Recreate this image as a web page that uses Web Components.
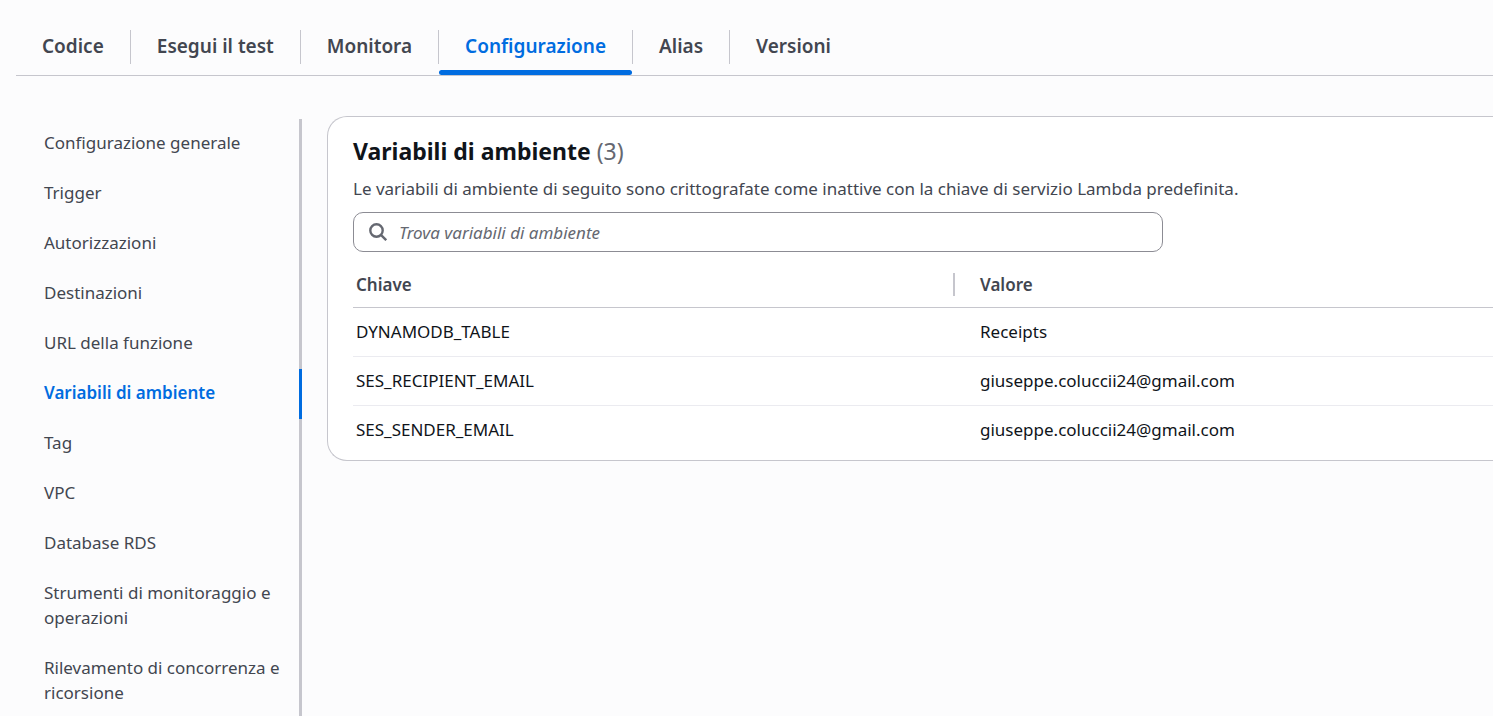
<!DOCTYPE html>
<html lang="it">
<head>
<meta charset="utf-8">
<meta name="viewport" content="width=device-width, initial-scale=1">
<title>Configurazione - Variabili di ambiente</title>
<style>
  :root {
    --accent: #006ce0;
    --text: #0f141a;
    --text-soft: #424650;
    --text-muted: #656871;
    --line: #c6c6cd;
    --line-soft: #ebebf0;
    --page: #fcfcfd;
  }
  body {
    margin: 0;
    background: var(--page);
    color: var(--text);
    font: 17px/25px "Noto Sans", "Open Sans", sans-serif;
  }
</style>
</head>
<body>
<config-page>
  <tab-bar slot="tabs">
    <tab-item>Codice</tab-item>
    <tab-item>Esegui il test</tab-item>
    <tab-item>Monitora</tab-item>
    <tab-item selected>Configurazione</tab-item>
    <tab-item>Alias</tab-item>
    <tab-item>Versioni</tab-item>
  </tab-bar>
  <side-nav slot="nav">
    <nav-item href="#generale">Configurazione generale</nav-item>
    <nav-item href="#trigger">Trigger</nav-item>
    <nav-item href="#autorizzazioni">Autorizzazioni</nav-item>
    <nav-item href="#destinazioni">Destinazioni</nav-item>
    <nav-item href="#url">URL della funzione</nav-item>
    <nav-item href="#variabili" current>Variabili di ambiente</nav-item>
    <nav-item href="#tag">Tag</nav-item>
    <nav-item href="#vpc">VPC</nav-item>
    <nav-item href="#rds">Database RDS</nav-item>
    <nav-item href="#monitoraggio">Strumenti di monitoraggio e operazioni</nav-item>
    <nav-item href="#concorrenza">Rilevamento di concorrenza e ricorsione</nav-item>
  </side-nav>
  <detail-card>
    <span slot="title">Variabili di ambiente</span>
    <span slot="count">(3)</span>
    <span slot="description">Le variabili di ambiente di seguito sono crittografate come inattive con la chiave di servizio Lambda predefinita.</span>
    <search-field label="Trova variabili di ambiente"></search-field>
    <variables-table></variables-table>
  </detail-card>
</config-page>

<script>
  class ShadowElement extends HTMLElement {
    constructor() {
      super();
      this.attachShadow({ mode: "open" }).innerHTML =
        "<style>*{box-sizing:border-box}</style>" + this.constructor.markup;
    }
  }

  customElements.define("config-page", class extends ShadowElement {
    static markup = `
      <style>
        :host { display: flex; flex-direction: column; min-height: 100vh; padding-left: 16px; box-sizing: border-box; }
        .body { display: flex; flex: 1; align-items: stretch; gap: 25px; padding-top: 40px; }
        main { flex: 1; min-width: 0; }
        slot[name=nav]::slotted(*) { flex: 0 0 286px; margin-top: 3px; }
      </style>
      <slot name="tabs"></slot>
      <div class="body"><slot name="nav"></slot><main><slot></slot></main></div>`;
  });

  customElements.define("tab-bar", class extends ShadowElement {
    static markup = `
      <style>
        :host { display: block; padding-top: 21px; border-bottom: 1px solid var(--line); }
        div { display: flex; }
      </style>
      <div role="tablist"><slot></slot></div>`;
  });

  customElements.define("tab-item", class extends ShadowElement {
    static markup = `
      <style>
        :host { display: flex; flex-direction: column; }
        button {
          margin: 9px 0 6px; padding: 0 26px 2px; height: 34px;
          border: 0; border-right: 1px solid var(--line); background: none;
          color: var(--text-soft); font: 600 19px/32px "Noto Sans", "Open Sans", sans-serif;
          cursor: pointer;
        }
        i { height: 5px; margin-right: 1px; border-radius: 3px; }
        :host([selected]) button { color: var(--accent); }
        :host([selected]) i { background: var(--accent); }
        :host(:last-child) button { border-right: 0; }
      </style>
      <button type="button" role="tab"><slot></slot></button><i></i>`;
    connectedCallback() {
      this.shadowRoot.querySelector("button").setAttribute("aria-selected", this.hasAttribute("selected"));
    }
  });

  customElements.define("side-nav", class extends ShadowElement {
    static markup = `
      <style>
        :host { display: block; box-sizing: border-box; }
        nav { display: flex; flex-direction: column; min-height: 100%; background: linear-gradient(var(--line), var(--line)) right / 3px 100% no-repeat; }
      </style>
      <nav aria-label="Configurazione"><slot></slot></nav>`;
  });

  customElements.define("nav-item", class extends ShadowElement {
    static markup = `
      <style>
        :host { display: block; }
        a {
          display: block; padding: 11px 16px 14px 28px;
          border-right: 3px solid transparent;
          color: var(--text-soft); text-decoration: none;
        }
        :host([current]) a { color: var(--accent); font-weight: 600; border-color: var(--accent); }
      </style>
      <a><slot></slot></a>`;
    connectedCallback() {
      const link = this.shadowRoot.querySelector("a");
      link.href = this.getAttribute("href");
      if (this.hasAttribute("current")) link.setAttribute("aria-current", "page");
    }
  });

  customElements.define("detail-card", class extends ShadowElement {
    static markup = `
      <style>
        :host {
          display: block; box-sizing: border-box; padding: 18px 0 5px 25px; background: #fff;
          border: 1px solid var(--line); border-right: 0; border-radius: 20px 0 0 20px;
        }
        h2 { margin: 0; font-size: 23px; line-height: 32px; font-weight: 700; }
        .count { color: var(--text-muted); font-weight: 400; }
        p { margin: 9px 0 11px; color: var(--text-soft); }
      </style>
      <h2><slot name="title"></slot> <span class="count"><slot name="count"></slot></span></h2>
      <p><slot name="description"></slot></p>
      <slot></slot>`;
  });

  customElements.define("search-field", class extends ShadowElement {
    static markup = `
      <style>
        :host { display: block; max-width: 810px; }
        label {
          display: flex; align-items: center; gap: 12px; height: 40px; padding: 0 15px;
          border: 1px solid #8c8c94; border-radius: 10px; background: #fff;
        }
        svg { flex: none; color: var(--text-muted); }
        input {
          flex: 1; min-width: 0; padding: 0; border: 0; outline: 0; background: none;
          color: var(--text); font: inherit;
        }
        input::placeholder { color: var(--text-muted); font-style: italic; opacity: 1; }
      </style>
      <label>
        <svg width="18" height="18" viewBox="0 0 18 18" fill="none" stroke="currentColor" stroke-width="2.4" aria-hidden="true">
          <circle cx="7.5" cy="7.5" r="6.2"/><path d="M11.9 11.9 17.2 17.2"/>
        </svg>
        <input type="search">
      </label>`;
    connectedCallback() {
      const input = this.shadowRoot.querySelector("input");
      input.placeholder = this.getAttribute("label");
      input.setAttribute("aria-label", this.getAttribute("label"));
    }
  });

  customElements.define("variables-table", class extends ShadowElement {
    static markup = `
      <style>
        :host { display: block; padding-top: 9px; }
        table { width: 100%; border-collapse: separate; border-spacing: 0; table-layout: fixed; }
        col.key { width: 602px; }
        th, td { height: 49px; padding: 0 0 2px 3px; text-align: left; border-bottom: 1px solid var(--line-soft); }
        th { height: 47px; padding-bottom: 0; font-weight: 600; color: var(--text-soft); border-color: var(--line); }
        th:first-child {
          background: linear-gradient(var(--line), var(--line)) right center / 2px 23px no-repeat;
        }
        th + th, td + td { padding-left: 25px; }
        tr:last-child td { border-bottom-color: transparent; }
      </style>
      <table>
        <colgroup><col class="key"><col></colgroup>
        <thead><tr><th scope="col">Chiave</th><th scope="col">Valore</th></tr></thead>
        <tbody>
          <tr><td>DYNAMODB_TABLE</td><td>Receipts</td></tr>
          <tr><td>SES_RECIPIENT_EMAIL</td><td>giuseppe.coluccii24@gmail.com</td></tr>
          <tr><td>SES_SENDER_EMAIL</td><td>giuseppe.coluccii24@gmail.com</td></tr>
        </tbody>
      </table>`;
  });
</script>
</body>
</html>
